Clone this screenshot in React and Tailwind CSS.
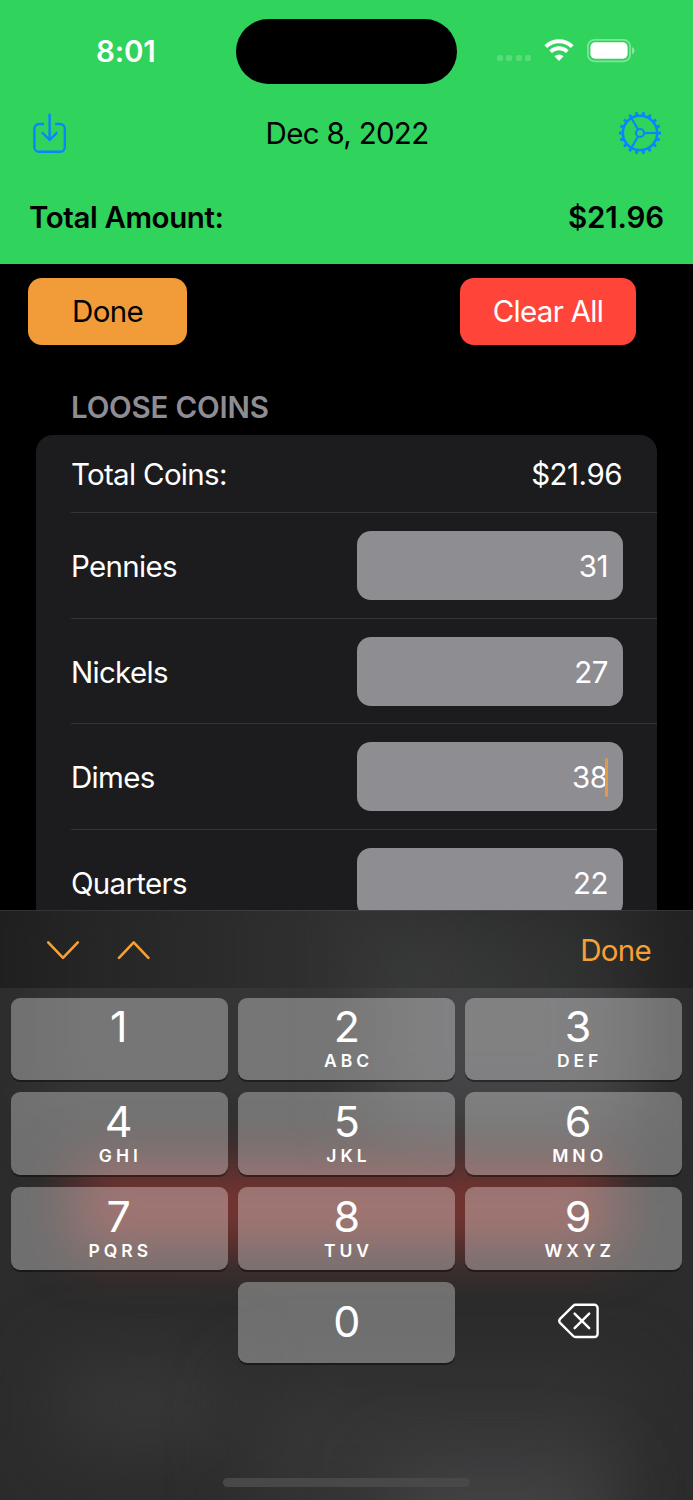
const coins = [
    { name: "Pennies", count: 31 },
    { name: "Nickels", count: 27 },
    { name: "Dimes", count: 38, focused: true },
    { name: "Quarters", count: 22 },
];

// Labels are nudged per column, as on the system number pad
const keys = [
    { digit: "1", letters: "", style: "h-[82px] pt-[5px] pr-[2px]" },
    { digit: "2", letters: "ABC", style: "h-[82px] pt-[5px]" },
    { digit: "3", letters: "DEF", style: "h-[82px] pt-[5px] pl-[8px]" },
    { digit: "4", letters: "GHI", style: "h-[83px] pt-[6px] pr-[2px]" },
    { digit: "5", letters: "JKL", style: "h-[83px] pt-[6px]" },
    { digit: "6", letters: "MNO", style: "h-[83px] pt-[6px] pl-[8px]" },
    { digit: "7", letters: "PQRS", style: "h-[83px] pt-[6px] pr-[2px]" },
    { digit: "8", letters: "TUV", style: "h-[83px] pt-[6px]" },
    { digit: "9", letters: "WXYZ", style: "h-[83px] pt-[6px] pl-[8px]" },
];

const teeth = Array.from({ length: 18 }, (_, i) => i * 20);

function GearIcon() {
    return (
        <svg
            width="44"
            height="44"
            viewBox="-22 -22 44 44"
            fill="none"
            stroke="#0a84ff"
            strokeWidth="2.1"
        >
            <circle r="17.2" strokeWidth="2.6" />
            <circle r="4" />
            {teeth.map((angle) => (
                <path
                    key={angle}
                    d="M17.5 0H21"
                    strokeWidth="2.9"
                    transform={`rotate(${angle})`}
                />
            ))}
            <path d="M4 0H17" />
            <path d="M4 0H17" transform="rotate(120)" />
            <path d="M4 0H17" transform="rotate(240)" />
        </svg>
    );
}

function ImportIcon() {
    return (
        <svg
            width="36"
            height="42"
            viewBox="0 -0.8 36 42"
            fill="none"
            stroke="#0a84ff"
            strokeWidth="2.4"
            strokeLinecap="round"
            strokeLinejoin="round"
        >
            <path
                d="M12 11.2H7A4.6 4.6 0 0 0 2.4 15.8V34.4A4.6 4.6 0 0 0 7 39H28.2A4.6 4.6 0 0 0 32.8 34.4V15.8A4.6 4.6 0 0 0 28.2 11.2H23.2"
                strokeLinecap="butt"
            />
            <path d="M17.6 1.8V26.5" />
            <path d="M10.6 20.2L17.6 27.2L24.6 20.2" />
        </svg>
    );
}

function WifiIcon() {
    return (
        <svg width="30" height="23" viewBox="0 0 30 23" fill="none" stroke="#fff">
            <path d="M1.8 7.6A19.2 19.2 0 0 1 28.2 7.6" strokeWidth="4" />
            <path d="M6.6 12.6A12.2 12.2 0 0 1 23.4 12.6" strokeWidth="3.8" />
            <path
                d="M10.4 17.2A7 7 0 0 1 19.6 17.2L15.5 21.6Q15 22.2 14.5 21.6Z"
                fill="#fff"
                stroke="none"
            />
        </svg>
    );
}

function BatteryIcon() {
    return (
        <svg width="49" height="24" viewBox="0 0 49 24">
            <rect
                x="0.9"
                y="0.9"
                width="42.2"
                height="21.4"
                rx="6.5"
                fill="none"
                stroke="#fff"
                strokeOpacity="0.4"
                strokeWidth="1.7"
            />
            <rect x="3.4" y="3.3" width="37.2" height="16.4" rx="4.6" fill="#fff" />
            <path d="M45.2 8A4 4 0 0 1 45.2 15.2Z" fill="#fff" fillOpacity="0.5" />
        </svg>
    );
}

function BackspaceIcon() {
    return (
        <svg
            width="44"
            height="38"
            viewBox="0 0 44 38"
            fill="none"
            stroke="#fff"
            strokeWidth="2.4"
            strokeLinecap="round"
            strokeLinejoin="round"
        >
            <path d="M18.5 2.8H37.4A3.2 3.2 0 0 1 40.6 6V31.8A3.2 3.2 0 0 1 37.4 35H18.5Q17.2 35 16.2 34L3.3 21.2Q1.2 18.9 3.3 16.6L16.2 3.8Q17.2 2.8 18.5 2.8Z" />
            <path d="M17.6 11.6L32.2 26.2M32.2 11.6L17.6 26.2" />
        </svg>
    );
}

function Header() {
    return (
        <header className="h-[264px] shrink-0 bg-[#30d35b]">
            <div className="flex h-[102px] pt-[19px]">
                <div className="w-[236px] pt-[11px] pl-[96px] text-[29.5px] leading-[42px] font-semibold tracking-[-0.2px] text-white">
                    8:01
                </div>
                <div className="h-[65px] w-[221px] rounded-full bg-black" />
                <div className="flex flex-1 pl-[40px]">
                    <div className="flex gap-[3.4px] pt-[36px]">
                        <span className="size-[6px] rounded-[2px] bg-white/20" />
                        <span className="size-[6px] rounded-[2px] bg-white/20" />
                        <span className="size-[6px] rounded-[2px] bg-white/20" />
                        <span className="size-[6px] rounded-[2px] bg-white/20" />
                    </div>
                    <div className="pt-[20px] pl-[13px]">
                        <WifiIcon />
                    </div>
                    <div className="pt-[20px] pl-[13px]">
                        <BatteryIcon />
                    </div>
                </div>
            </div>
            <div className="flex h-[62px] items-center justify-between pr-[31px] pl-[32px]">
                <ImportIcon />
                <span className="pl-[8px]">Dec 8, 2022</span>
                <GearIcon />
            </div>
            <div className="flex h-[106px] items-center justify-between pr-[29px] pl-[29px] font-semibold">
                <span className="tracking-[-0.4px]">Total Amount:</span>
                <span className="tracking-[-0.15px]">$21.96</span>
            </div>
        </header>
    );
}

function CoinRow({ name, count, focused }) {
    return (
        <div className="ml-[35px] flex h-[105.7px] items-center justify-between border-t border-[#343436] pr-[34px]">
            <span className="pt-px">{name}</span>
            <div className="flex h-[69px] w-[266px] items-center justify-end rounded-[14px] bg-[#8e8d92] pt-px pr-[15px]">
                <span className="tracking-[-0.5px]">{count}</span>
                {focused && (
                    <span className="-ml-[3px] h-[39px] w-[3.5px] rounded-xs bg-[#e09a4c]" />
                )}
            </div>
        </div>
    );
}

function Keyboard() {
    return (
        <div className="relative z-10 h-[590px] shrink-0 overflow-hidden bg-[#2c2c2c] text-white">
            {/* Page content glowing through the keyboard */}
            <div className="absolute top-[-30px] left-[40px] h-[240px] w-[600px] bg-[#383838] opacity-80 blur-[30px]" />
            <div className="absolute top-[10px] left-[375px] h-[210px] w-[250px] bg-[#464648] blur-[36px]" />
            <div className="absolute top-[254px] left-[75px] h-[84px] w-[540px] bg-[#783531] blur-[27px]" />
            <div className="absolute top-[450px] left-[60px] h-[90px] w-[170px] bg-[#373737] blur-[34px]" />
            <div className="absolute top-[470px] left-[250px] h-[140px] w-[380px] bg-[#363637] blur-[36px]" />
            <div className="absolute top-[560px] left-[390px] h-[100px] w-[210px] bg-[#454547] blur-[36px]" />

            <div className="relative flex h-[78px] items-center border-t border-white/8 bg-gradient-to-r from-[#1a1b1a]/75 via-[#262826]/30 to-[#1a1b1a]/60 pr-[42px] pl-[46px] text-[#f7a035]">
                <svg
                    width="104"
                    height="22"
                    viewBox="0 0 104 22"
                    fill="none"
                    stroke="currentColor"
                    strokeWidth="2.6"
                    strokeLinecap="round"
                    strokeLinejoin="round"
                >
                    <path d="M2.2 3.4L17 18.8L31.8 3.4" />
                    <path d="M73 18.8L87.7 3.4L102.4 18.8" />
                </svg>
                <span className="ml-auto">Done</span>
            </div>

            <div className="relative grid grid-cols-3 gap-x-[10.5px] gap-y-[12px] px-[11px] pt-[10px]">
                {keys.map((key) => (
                    <button
                        key={key.digit}
                        className={`${key.style} flex flex-col items-center rounded-[9px] bg-white/32 shadow-[0_2px_0_rgba(0,0,0,0.4)]`}
                    >
                        <span className="text-[43px] leading-[47px] font-normal">
                            {key.digit}
                        </span>
                        <span className="pl-[4px] text-[17.5px] leading-[22px] font-semibold tracking-[4px]">
                            {key.letters}
                        </span>
                    </button>
                ))}
                <span />
                <button className="flex h-[81px] items-center justify-center rounded-[9px] bg-white/32 pb-[3px] text-[43px] leading-[46px] shadow-[0_2px_0_rgba(0,0,0,0.4)]">
                    0
                </button>
                <div className="flex h-[77px] items-center justify-center pl-[10px]">
                    <BackspaceIcon />
                </div>
            </div>

            <div className="relative mx-auto mt-[115px] h-[9px] w-[247px] rounded-full bg-[#484848]" />
        </div>
    );
}

export default function App() {
    return (
        <div className="flex h-[1500px] w-[693px] flex-col overflow-hidden bg-black font-['Inter','Liberation_Sans',sans-serif] text-[29.5px] leading-[36px] tracking-[-0.7px]">
            <Header />
            <main className="h-[646px] shrink-0 overflow-hidden text-white">
                <div className="flex justify-between pt-[13.5px] pr-[57px] pl-[28px]">
                    <button className="h-[67px] w-[159px] rounded-[14px] bg-[#f19c38] text-black">
                        Done
                    </button>
                    <button className="h-[67px] w-[176px] rounded-[14px] bg-[#ff453a]">
                        Clear All
                    </button>
                </div>
                <h2 className="mt-[44.5px] pl-[71px] font-semibold tracking-[-0.2px] text-[#8e8d93]">
                    LOOSE COINS
                </h2>
                <section className="mt-[10px] mr-[36px] ml-[36px] rounded-t-[17px] bg-[#1c1c1e]">
                    <div className="flex h-[77px] items-center justify-between pr-[35px] pl-[35px] pt-px">
                        <span>Total Coins:</span>
                        <span className="tracking-[-0.5px]">$21.96</span>
                    </div>
                    {coins.map((coin) => (
                        <CoinRow key={coin.name} {...coin} />
                    ))}
                </section>
            </main>
            <Keyboard />
        </div>
    );
}
